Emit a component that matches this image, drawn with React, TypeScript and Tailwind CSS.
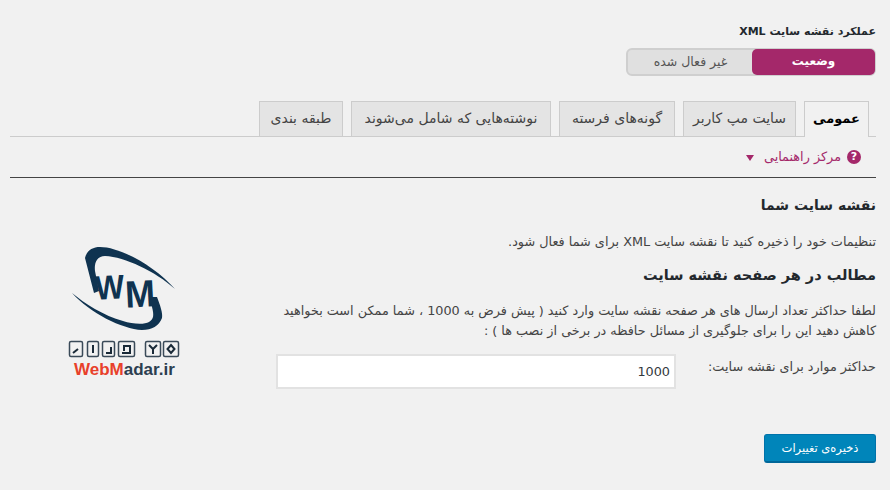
const FONT = "font-['DejaVu_Sans','Liberation_Sans',sans-serif]"

const TABS = [
  { label: 'عمومی', box: 'w-[65px] h-[36px] bg-[#f1f1f1] text-black font-bold text-[13px]' },
  { label: 'سایت مپ کاربر', box: 'w-[113px] h-[35px] bg-[#e4e4e4] text-[#444] text-[14px]' },
  { label: 'گونه‌های فرسته', box: 'w-[116px] h-[35px] bg-[#e4e4e4] text-[#444] text-[14px]' },
  { label: 'نوشته‌هایی که شامل می‌شوند', box: 'w-[200px] h-[35px] bg-[#e4e4e4] text-[#444] text-[14px]' },
  { label: 'طبقه بندی', box: 'w-[84px] h-[35px] bg-[#e4e4e4] text-[#444] text-[14px]' },
]

function Logo() {
  return (
    <svg width="130" height="150" viewBox="0 0 130 150" className="block [direction:ltr]">
      <path d="M25 17 C27 9 33 6 40 6 C60 6 95 25 115 48 C95 30 65 16 45 15 C37 15 34 22 35 30 L39 50 L34 52 Z" fill="#0f3350" />
      <path d="M12 52 C24 62 44 75 63 80 C72 83 84 84 89 81 C94 78 94 74 92 66 L90 56 L97 56 C100 64 103 72 102 77 C99 85 92 89 82 89 C62 88 30 72 12 52 Z" fill="#0f3350" />
      <text x="35" y="58" textLength="29" lengthAdjust="spacingAndGlyphs" transform="rotate(-3 49 46)" fontFamily="'Liberation Sans', sans-serif" fontWeight="700" fontSize="34" fill="#0f3350">W</text>
      <text x="65" y="66" textLength="30" lengthAdjust="spacingAndGlyphs" transform="rotate(-3 80 54)" fontFamily="'Liberation Sans', sans-serif" fontWeight="700" fontSize="38" fill="#0f3350">M</text>
      <g fill="none" stroke="#3a4a58" strokeWidth="1.500">
        <rect x="9.500" y="100.500" width="13" height="15" rx="1.500" />
        <rect x="27.500" y="100.500" width="11" height="15" rx="1.500" />
        <rect x="42.500" y="100.500" width="12" height="15" rx="1.500" />
        <rect x="58.500" y="100.500" width="16" height="15" rx="1.500" />
        <rect x="85.500" y="100.500" width="15" height="15" rx="1.500" />
        <rect x="103.500" y="100.500" width="15" height="15" rx="1.500" />
      </g>
      <g fill="none" stroke="#1a2a38" strokeWidth="2">
        <path d="M13 112 L18 108" />
        <path d="M33 104 V112" />
        <path d="M46 112 H51 V106" />
        <path d="M62 112 H70 V105 H64 V110" />
        <path d="M89 104 L93 108 L97 104 M93 108 V113" />
        <path d="M111 104 L114.500 108 L111 112 L107.500 108 Z" />
      </g>
      <text x="14" y="134" fontFamily="'Liberation Sans', sans-serif" fontWeight="700" fontSize="17">
        <tspan fill="#e8402a">WebM</tspan>
        <tspan fill="#2c3e50">adar.ir</tspan>
      </text>
    </svg>
  )
}

export default function App() {
  return (
    <div dir="rtl" className={`w-[890px] h-[490px] overflow-hidden bg-[#f1f1f1] text-[#444] text-[12.800px] pt-[24px] pr-[14px] pl-[10px] ${FONT}`}>
      <h3 className="text-[11px] leading-[15px] font-bold text-[#23282d]">عملکرد نقشه سایت XML</h3>

      <div className="mt-[9px] flex w-[250px] h-[28px] rounded-[6px] border-2 border-[#cfcfcf] bg-[#e0e0e0]">
        <div className="w-[123px] -m-[1px] h-[26px] rounded-[5px] bg-[#a4286a] text-white text-[12px] font-bold text-center leading-[25px]">وضعیت</div>
        <div className="flex-1 text-center text-[12.500px] leading-[24px] text-[#555]">غیر فعال شده</div>
      </div>

      <div className="mt-[25px] flex gap-[8px] pr-[7px] border-b border-[#ccc] h-[36px]">
        {TABS.map((tab) => (
          <div key={tab.label} className={`${tab.box} border border-b-0 border-[#ccc] leading-[33px] text-center`}>
            {tab.label}
          </div>
        ))}
      </div>

      <div className="mt-[12px] h-[29px] border-b border-[#444] pr-[15px] flex items-start gap-[6px] text-[#a4286a]">
        <span className="mt-[1px] w-[14px] h-[14px] rounded-full bg-[#a4286a] text-white text-[11px] font-bold leading-[14px] text-center">?</span>
        <span className="text-[12.800px] leading-[16px]">مرکز راهنمایی</span>
        <span className="mt-[6px] mr-[4px] w-0 h-0 border-x-[4px] border-x-transparent border-t-[6px] border-t-[#a4286a]" />
      </div>

      <div className="flex">
        <div className="w-[600px] shrink-0">
          <h2 className="mt-[17px] text-[14px] leading-[20px] font-bold text-[#23282d]">نقشه سایت شما</h2>
          <p className="mt-[18px] leading-[18px]">تنظیمات خود را ذخیره کنید تا نقشه سایت XML برای شما فعال شود.</p>
          <h2 className="mt-[14px] text-[14.500px] leading-[20px] font-bold text-[#23282d]">مطالب در هر صفحه نقشه سایت</h2>
          <p className="mt-[16px] leading-[20px]">
            لطفا حداکثر تعداد ارسال های هر صفحه نقشه سایت وارد کنید ( پیش فرض به 1000 ، شما ممکن است بخواهید کاهش دهید این را برای جلوگیری از مسائل حافظه در برخی از نصب ها ) :
          </p>
          <div className="mt-[13px] flex items-start justify-between">
            <label className="mt-[4px] leading-[18px]">حداکثر موارد برای نقشه سایت:</label>
            <input
              readOnly
              value="1000"
              dir="rtl"
              className="w-[400px] h-[35px] border-2 border-[#e2e2e2] bg-white px-[3px] pr-[4px] text-[12.800px] text-[#32373c] outline-none"
            />
          </div>
        </div>
        <div className="flex-1 pt-[63px] pr-[86px]">
          <Logo />
        </div>
      </div>

      <div className="mt-[43px]">
        <button className="h-[29px] w-[112px] rounded-[3px] bg-[#0085ba] border border-[#0073aa] border-b-[2px] border-b-[#006799] text-white text-[11.500px] leading-[24px]">
          ذخیره‌ی تغییرات
        </button>
      </div>
    </div>
  )
}
